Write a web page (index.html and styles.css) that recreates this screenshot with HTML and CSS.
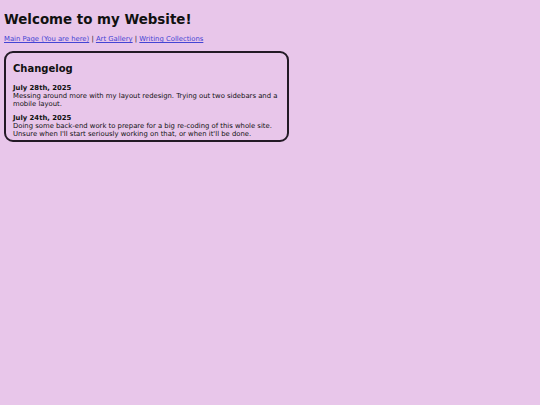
FILE: index.html
```html
<!DOCTYPE html>
<html>
<head>
<meta charset="utf-8">
<link rel="stylesheet" href="styles.css">
</head>
<body>
<h1 class="title">Welcome to my Website!</h1>
<nav class="nav"><a href="#">Main Page (You are here)</a> | <a href="#">Art Gallery</a> | <a href="#">Writing Collections</a></nav>
<section class="box">
<h2 class="box-title">Changelog</h2>
<div class="entry">
<div class="date">July 28th, 2025</div>
<div class="text">Messing around more with my layout redesign. Trying out two sidebars and a mobile layout.</div>
</div>
<div class="entry">
<div class="date">July 24th, 2025</div>
<div class="text">Doing some back-end work to prepare for a big re-coding of this whole site. Unsure when I'll start seriously working on that, or when it'll be done.</div>
</div>
</section>
</body>
</html>
```
FILE: styles.css
```css
html, body {
  background: #e8c6ea;
}
body {
  margin: 4px;
  font-family: "DejaVu Sans", sans-serif;
  color: #111;
}
.title {
  font-size: 13.4px;
  font-weight: bold;
  margin: 8px 0 0;
}
.nav {
  margin-top: 8px;
  font-size: 6.85px;
}
.nav a {
  color: #4444d4;
}
.box {
  margin-top: 8px;
  width: 285px;
  box-sizing: border-box;
  border: 2px solid #231a26;
  border-radius: 9px;
  padding: 10px 7px 1.5px 7px;
}
.box-title {
  font-size: 10px;
  margin: 0 0 10px;
}
.entry {
  font-size: 6.85px;
  margin-bottom: 6px;
}
.entry:last-child {
  margin-bottom: 0;
}
.date {
  font-weight: bold;
}
```
